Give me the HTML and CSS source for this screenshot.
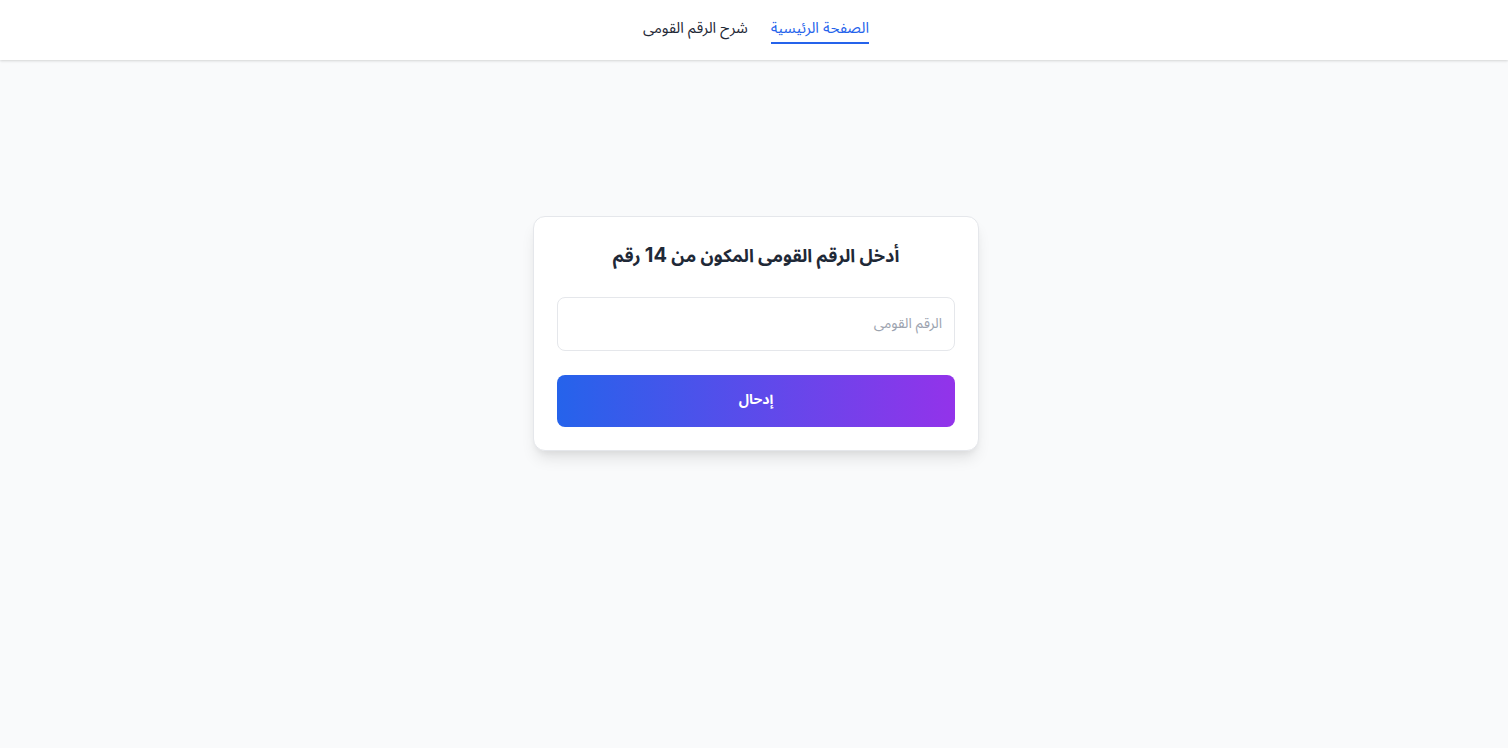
FILE: index.html
```html
<!DOCTYPE html>
<html lang="ar" dir="rtl">
<head>
<meta charset="utf-8">
<title>الرقم القومى</title>
<link rel="stylesheet" href="styles.css">
</head>
<body>
<header class="navbar">
  <nav class="nav">
    <a href="#" class="nav-link active">الصفحة الرئيسية</a>
    <a href="#" class="nav-link">شرح الرقم القومى</a>
  </nav>
</header>
<main class="main">
  <form class="card">
    <h1 class="title">أدخل الرقم القومى المكون من <span class="title-num">14</span> رقم</h1>
    <input class="field" type="text" placeholder="الرقم القومى">
    <button class="btn" type="button">إدحال</button>
  </form>
</main>
</body>
</html>
```
FILE: styles.css
```css
* { box-sizing: border-box; }
html, body { margin: 0; padding: 0; }
body {
  font-family: Inter, "Noto Sans Arabic", "DejaVu Sans", sans-serif;
  background: #f9fafb;
  color: #1f2937;
  min-height: 748px;
  padding-left: 4px;
}
.navbar {
  height: 60px;
  background: #ffffff;
  margin-left: -4px;
  padding-left: 4px;
  box-shadow: 0 1px 3px rgba(0,0,0,0.1), 0 1px 2px rgba(0,0,0,0.06);
  display: flex;
  justify-content: center;
  align-items: flex-start;
}
.nav {
  display: flex;
  gap: 23px;
  align-items: flex-start;
  padding-top: 14px;
}
.nav-link {
  font-size: 15px;
  line-height: 28px;
  color: #1f2937;
  text-decoration: none;
  padding: 0;
  border-bottom: 2px solid transparent;
}
.nav-link.active {
  color: #2563eb;
  border-bottom-color: #2563eb;
}
.main {
  display: flex;
  justify-content: center;
  padding-top: 156px;
}
.card {
  width: 446px;
  background: #ffffff;
  border: 1px solid #e5e7eb;
  border-radius: 12px;
  box-shadow: 0 10px 15px -3px rgba(0,0,0,0.1), 0 4px 6px -2px rgba(0,0,0,0.05);
  padding: 23px 23px;
  display: flex;
  flex-direction: column;
}
.title {
  margin: 0 0 25px;
  font-size: 18px;
  line-height: 32px;
  height: 32px;
  font-weight: 700;
  text-align: center;
  color: #1f2937;
}
.title-num { font-size: 20px; line-height: 1; }
.field {
  height: 54px;
  border: 1px solid #e5e7eb;
  border-radius: 8px;
  padding: 0 12px 3px;
  font-size: 14px;
  font-family: inherit;
  direction: rtl;
  background: #fff;
  outline: none;
  margin-bottom: 24px;
}
.field::placeholder { color: #9ca3af; }
.btn {
  height: 52px;
  border: none;
  border-radius: 8px;
  background: linear-gradient(to right, #2563eb, #9333ea);
  color: #ffffff;
  font-size: 14px;
  font-weight: 700;
  font-family: inherit;
  padding: 0 0 4px;
  cursor: pointer;
}
```
